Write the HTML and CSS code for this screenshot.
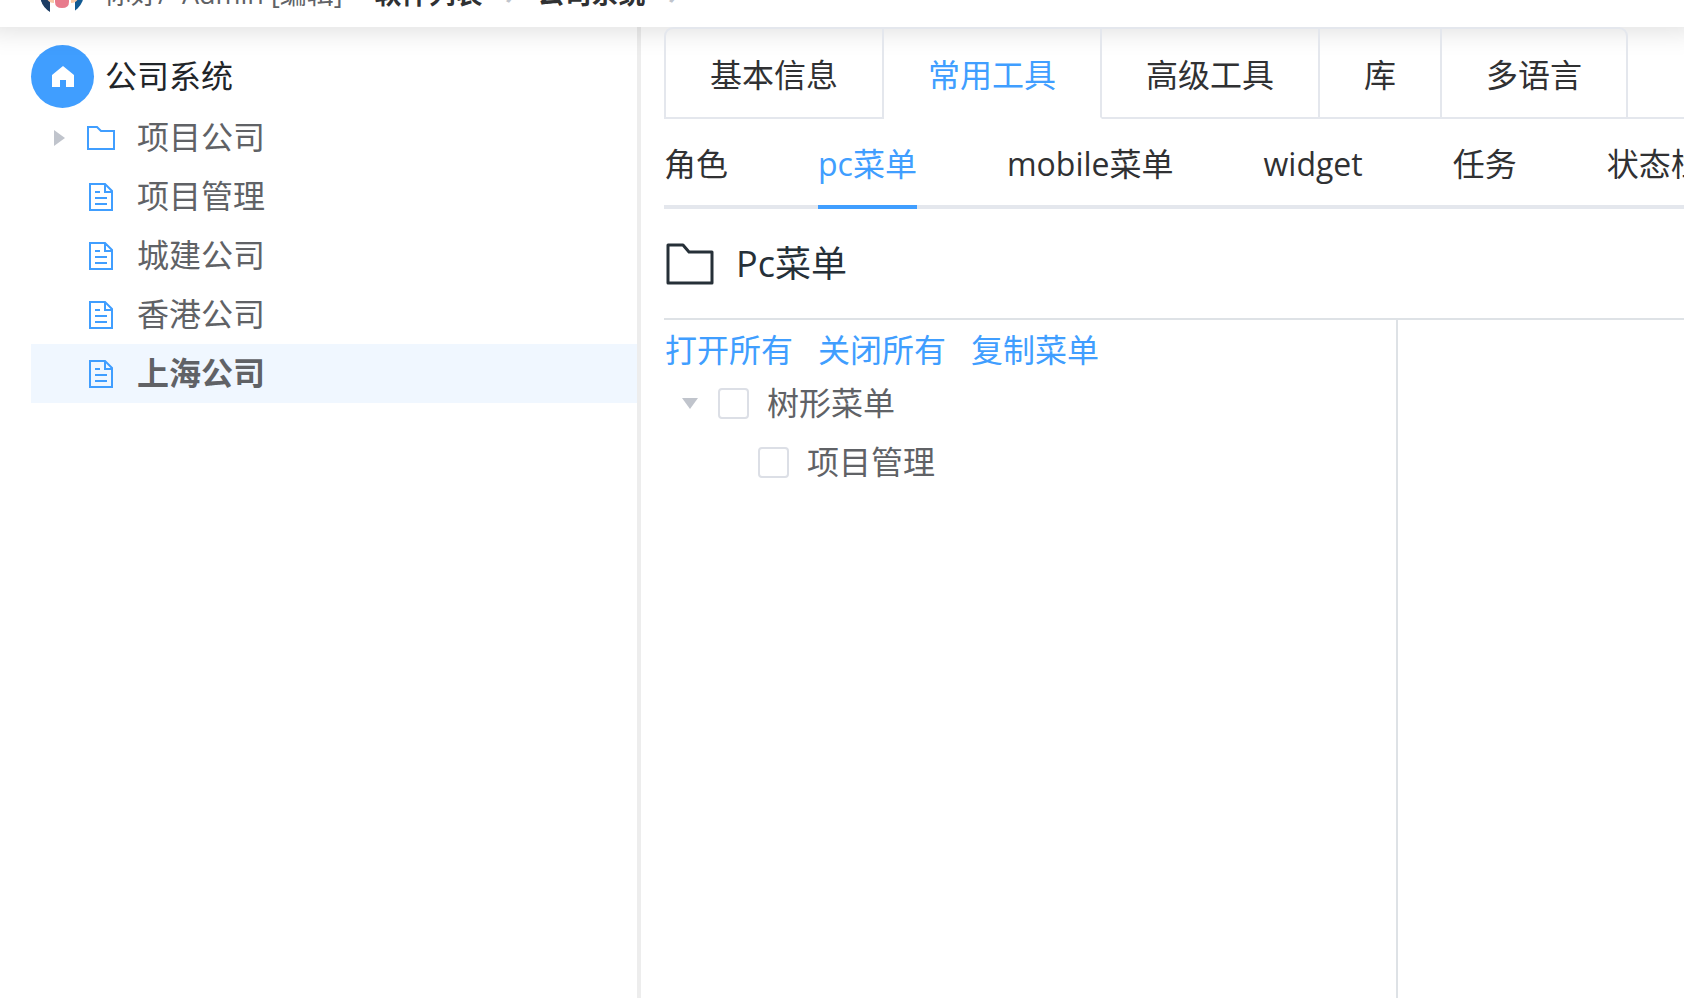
FILE: index.html
```html
<!DOCTYPE html>
<html lang="zh-CN">
<head>
<meta charset="utf-8">
<title>公司系统</title>
<link rel="stylesheet" href="styles.css">
</head>
<body>
	<!-- icons -->
	<svg class="defs">
		<symbol id="folder" viewBox="0 0 28 24">
			<path d="M1 1H10L14 5H27V23H1Z" fill="none" stroke="currentColor" stroke-width="2"/>
		</symbol>
		<symbol id="doc" viewBox="0 0 24 28">
			<path d="M1 1H16L23 8V27H1Z M16 1V9H23 M6 9H11 M6 15H18 M6 21H18" fill="none" stroke="currentColor" stroke-width="2"/>
		</symbol>
	</svg>

	<header class="header">
		<svg class="avatar" viewBox="0 0 44 44">
			<circle cx="22" cy="22" r="22" fill="#125a92"/>
			<path d="M0 22A22 22 0 0 0 10 41V22Z" fill="#1d3c63"/>
			<path d="M10 0H35V44H10Z" fill="#fff"/>
			<path d="M7 22H14V32Q9 32 7 28ZM31 22H38V28Q36 32 31 32Z" fill="#f8c9a8"/>
			<path d="M15 29H29V31Q29 37 22 37Q15 37 15 31Z" fill="#e87a8c"/>
		</svg>
		<span class="hello">你好/ &nbsp;Admin [编辑]</span>
		<nav class="crumbs">
			<a href="#">软件列表</a>
			<span class="sep">›</span>
			<a href="#">公司系统</a>
			<span class="sep">›</span>
		</nav>
	</header>

	<div class="container">
		<aside class="side">
			<div class="app">
				<span class="app-icon">
					<svg viewBox="0 0 22 22"><path d="M11 0L22 9V21H14V14H8V21H0V9Z" fill="#fff"/></svg>
				</span>
				<span class="text">公司系统</span>
			</div>
			<ul class="tree">
				<li class="node"><i class="arrow"></i><svg class="icon"><use href="#folder"/></svg><span class="text">项目公司</span></li>
				<li class="node"><i class="arrow leaf"></i><svg class="icon"><use href="#doc"/></svg><span class="text">项目管理</span></li>
				<li class="node"><i class="arrow leaf"></i><svg class="icon"><use href="#doc"/></svg><span class="text">城建公司</span></li>
				<li class="node"><i class="arrow leaf"></i><svg class="icon"><use href="#doc"/></svg><span class="text">香港公司</span></li>
				<li class="node current"><i class="arrow leaf"></i><svg class="icon"><use href="#doc"/></svg><span class="text">上海公司</span></li>
			</ul>
		</aside>

		<main class="main">
			<div class="tabs">
				<button class="tab">基本信息</button>
				<button class="tab active">常用工具</button>
				<button class="tab">高级工具</button>
				<button class="tab">库</button>
				<button class="tab">多语言</button>
				<span class="tabs-rest"></span>
			</div>
			<div class="subtabs">
				<button class="subtab">角色</button>
				<button class="subtab active">pc菜单</button>
				<button class="subtab">mobile菜单</button>
				<button class="subtab">widget</button>
				<button class="subtab">任务</button>
				<button class="subtab">状态栏</button>
			</div>
			<h2 class="title">
				<svg class="title-icon" viewBox="0 0 48 42"><path d="M2 2H17L23 9H46V40H2Z" fill="none" stroke="currentColor" stroke-width="3" stroke-linejoin="round"/></svg>
				<span>Pc菜单</span>
			</h2>
			<div class="panels">
				<section class="menu">
					<div class="links">
						<a href="#">打开所有</a>
						<a href="#">关闭所有</a>
						<a href="#">复制菜单</a>
					</div>
					<div class="check-node">
						<i class="arrow open"></i>
						<label><input type="checkbox"><span class="text">树形菜单</span></label>
					</div>
					<div class="check-node child">
						<i class="arrow leaf"></i>
						<label><input type="checkbox"><span class="text">项目管理</span></label>
					</div>
				</section>
				<section class="detail"></section>
			</div>
		</main>
	</div>
</body>
</html>
```
FILE: styles.css
```css
* {
	box-sizing: border-box;
}

body {
	margin: 0;
	min-height: 100vh;
	display: flex;
	flex-direction: column;
	overflow: hidden;
	background: #fff;
	color: #212529;
	font-family: "Open Sans", "Noto Sans CJK SC", sans-serif;
	font-size: 32px;
	line-height: 40px;
}

button {
	margin: 0;
	background: none;
	border: 0;
	color: #303133;
	font: inherit;
	white-space: nowrap;
	cursor: pointer;
}

a {
	color: #409eff;
	text-decoration: none;
}

.defs {
	display: none;
}

/* header */
.header {
	position: relative;
	z-index: 2;
	display: flex;
	align-items: flex-end;
	height: 27px;
	padding: 0 40px 12px;
	overflow: hidden;
	background: #fff;
	box-shadow: 0 -10px 27px 14px rgba(0, 0, 0, 0.13);
	font-size: 27px;
	line-height: 42px;
	white-space: nowrap;
}

.avatar {
	flex: none;
	width: 44px;
	height: 44px;
	margin-right: 20px;
}

.hello {
	color: #606266;
}

.crumbs {
	display: flex;
	margin-left: 32px;
	font-weight: bold;
}

.crumbs a {
	color: #303133;
}

.sep {
	width: 55px;
	color: #c0c4cc;
	text-align: center;
}

/* layout */
.container {
	flex: 1;
	display: flex;
}

.side {
	flex: none;
	width: 641px;
	padding: 18px 0 0 31px;
	border-right: 4px solid #ededed;
}

.main {
	flex: 1;
	display: flex;
	flex-direction: column;
	min-width: 0;
	margin-left: 23px;
}

/* left tree */
.app {
	display: flex;
	align-items: center;
	gap: 11px;
}

.app-icon {
	display: flex;
	align-items: center;
	justify-content: center;
	width: 63px;
	height: 63px;
	border-radius: 50%;
	background: #409eff;
}

.app-icon svg {
	width: 22px;
	height: 22px;
}

.tree {
	margin: 0;
	padding: 0;
	list-style: none;
}

.node {
	display: flex;
	align-items: center;
	height: 59px;
	padding-left: 23px;
	color: #606266;
}

.node.current {
	background: #f0f7ff;
	font-weight: bold;
}

.text {
	padding-bottom: 1px;
}

.icon {
	width: 28px;
	height: 28px;
	margin: 0 22px;
	color: #409eff;
}

.arrow {
	flex: none;
	width: 11px;
	border: solid transparent;
	border-width: 8px 0 8px 11px;
	border-left-color: #c0c4cc;
}

.arrow.open {
	width: 16px;
	border-width: 11px 8px 0;
	border-color: #c0c4cc transparent transparent;
}

.arrow.leaf {
	visibility: hidden;
}

/* tabs, borders stay above the header shadow */
.tabs {
	position: relative;
	z-index: 3;
	display: flex;
	height: 92px;
}

.tab {
	padding: 3px 44px 0;
	border: solid #e4e7ed;
	border-width: 2px 2px 2px 0;
}

.tab:first-child {
	border-left-width: 2px;
	border-top-left-radius: 9px;
}

.tab:nth-last-child(2) {
	border-top-right-radius: 9px;
}

.tab.active {
	border-bottom-color: transparent;
	color: #409eff;
}

.tabs-rest {
	flex: 1;
	border-bottom: 2px solid #e4e7ed;
}

.subtabs {
	display: flex;
	gap: 90px;
	height: 90px;
	overflow: hidden;
	box-shadow: inset 0 -4px #e4e7ed;
}

.subtab {
	flex: none;
	padding: 4px 0 0;
	border-bottom: 4px solid transparent;
}

.subtab.active {
	border-bottom-color: #409eff;
	color: #409eff;
}

/* menu editor */
.title {
	display: flex;
	align-items: center;
	gap: 22px;
	height: 111px;
	margin: 0;
	padding: 1px 0 0 2px;
	border-bottom: 2px solid #dee2e6;
	color: #263038;
	font-size: 36px;
	font-weight: normal;
}

.title-icon {
	width: 48px;
	height: 42px;
}

.panels {
	flex: 1;
	display: flex;
}

.menu {
	width: 72%;
	border-right: 2px solid #dee2e6;
}

.detail {
	flex: 1;
}

.links {
	display: flex;
	gap: 25px;
	padding: 10px 1px 4px;
}

.check-node {
	display: flex;
	align-items: center;
	height: 59px;
	padding-left: 18px;
	color: #606266;
}

.check-node.child {
	padding-left: 63px;
}

.check-node label {
	display: flex;
	align-items: center;
	gap: 18px;
	margin-left: 20px;
}

.check-node input {
	appearance: none;
	width: 31px;
	height: 31px;
	margin: 0;
	border: 2px solid #dcdfe6;
	border-radius: 4px;
	background: #fff;
}

.check-node input:checked {
	border-color: #409eff;
	background: #409eff;
}
```
